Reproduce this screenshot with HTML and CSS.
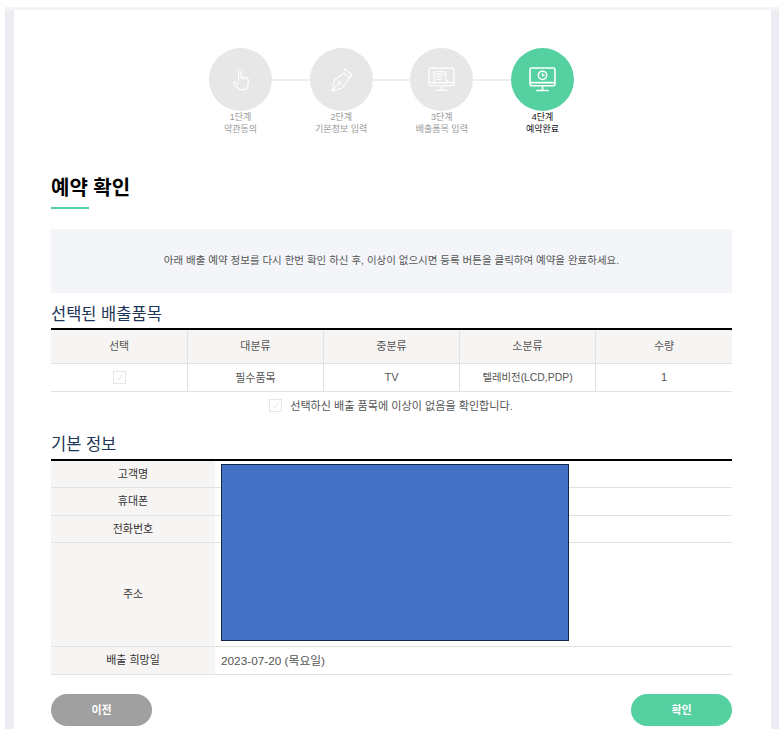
FILE: index.html
```html
<!DOCTYPE html>
<html lang="ko">
<head>
<meta charset="utf-8">
<title>예약 확인</title>
<link rel="stylesheet" href="styles.css">
</head>
<body>
<div class="frame">
<main class="panel">
  <ol class="steps">
    <li class="step">
      <span class="circle">
        <svg class="icon" viewBox="0 0 24 24" fill="none" stroke="currentColor" stroke-width="1.100"><path d="M9.500 13V5.500a1.300 1.300 0 0 1 2.600 0V11l0-1.200a1.200 1.200 0 0 1 2.400 0V11.500l0-1a1.200 1.200 0 0 1 2.400 0v1l0-.4a1.100 1.100 0 0 1 2.200 0V16c0 3.500-2.300 6-5.600 6-3 0-4.300-1.300-5.500-3L4.600 15.800c-.8-1.400 1-2.600 2.100-1.500L9.500 16.500"/><path d="M10.800 .8v1.800M7.400 1.800l1 1.400M14.200 1.800l-1 1.400"/></svg>
      </span>
      <span class="label">1단계<br>약관동의</span>
    </li>
    <li class="line"></li>
    <li class="step">
      <span class="circle">
        <svg class="icon" viewBox="0 0 24 24" fill="none" stroke="currentColor" stroke-width="1.100"><path d="M3 23l2.500-11L15 5l5 5.500-7 9.500z"/><path d="M14.500 3.500L16.500 1l6.500 6.500-2.500 2.500"/><path d="M3 23l6.500-7"/><circle cx="10.500" cy="14.500" r="1.500"/></svg>
      </span>
      <span class="label">2단계<br>기본정보 입력</span>
    </li>
    <li class="line"></li>
    <li class="step">
      <span class="circle">
        <svg class="icon icon-wide" viewBox="0 0 26 24" fill="none" stroke="currentColor" stroke-width="1.100"><rect x="1" y="1" width="24" height="17" rx="1.500"/><path d="M13 18v4M7 22.500h12M1 15h24"/><path d="M6 15V4.500h11v5M8 7h7M8 9.500h5M8 12h5"/><path d="M16 10.500l3 3-1 .5 1 1"/></svg>
      </span>
      <span class="label">3단계<br>배출품목 입력</span>
    </li>
    <li class="line"></li>
    <li class="step step-active">
      <span class="circle">
        <svg class="icon icon-wide" viewBox="0 0 26 24" fill="none" stroke="currentColor" stroke-width="1.500"><rect x="1" y="1" width="24" height="17" rx="1.500"/><path d="M13 18v4M7 22.500h12M1 15h24"/><circle cx="13" cy="8" r="4"/><path d="M13 6v2.200h2"/></svg>
      </span>
      <span class="label">4단계<br>예약완료</span>
    </li>
  </ol>

  <h1 class="title">예약 확인</h1>
  <p class="notice">아래 배출 예약 정보를 다시 한번 확인 하신 후, 이상이 없으시면 등록 버튼을 클릭하여 예약을 완료하세요.</p>

  <h2 class="subtitle">선택된 배출품목</h2>
  <table class="items">
    <thead>
      <tr><th class="col-first">선택</th><th>대분류</th><th>중분류</th><th>소분류</th><th>수량</th></tr>
    </thead>
    <tbody>
      <tr>
        <td><span class="check"><svg viewBox="0 0 13 13" fill="none" stroke="#e2e2e2" stroke-width="1"><path d="M3 6.500l2.500 3L10 3"/></svg></span></td>
        <td class="cell-text">필수품목</td><td class="cell-text">TV</td><td class="cell-text cell-narrow">텔레비전(LCD,PDP)</td><td class="cell-text">1</td>
      </tr>
    </tbody>
  </table>
  <p class="confirm">
    <span class="check"><svg viewBox="0 0 13 13" fill="none" stroke="#e2e2e2" stroke-width="1"><path d="M3 6.500l2.500 3L10 3"/></svg></span>
    <span class="confirm-text">선택하신 배출 품목에 이상이 없음을 확인합니다.</span>
  </p>

  <h2 class="subtitle subtitle-basic">기본 정보</h2>
  <div class="basic-wrap">
    <table class="basic">
      <tbody>
        <tr class="r1"><th>고객명</th><td></td></tr>
        <tr class="r2"><th>휴대폰</th><td></td></tr>
        <tr class="r3"><th>전화번호</th><td></td></tr>
        <tr class="r4"><th>주소</th><td></td></tr>
        <tr class="r5"><th>배출 희망일</th><td class="date">2023-07-20 (목요일)</td></tr>
      </tbody>
    </table>
    <div class="redaction"></div>
  </div>

  <div class="actions">
    <a class="btn btn-prev">이전</a>
    <a class="btn btn-ok">확인</a>
  </div>
</main>
</div>
</body>
</html>
```
FILE: styles.css
```css
* { box-sizing: border-box; }
html, body { margin: 0; padding: 0; background: #fff; }
body {
  font-family: "Liberation Sans", "Noto Sans CJK KR", sans-serif;
  font-size: 11px;
  color: #555;
  padding: 7px 5px 8px;
}
.frame {
  background: linear-gradient(#f4f4f6 3px, #ecedf2 3px);
  padding: 3px 8px 0 9px;
  height: 722px;
  overflow: hidden;
}
.panel {
  background: #fff;
  height: 719px;
  padding: 38px 39px 0 37px;
}
.steps {
  list-style: none;
  margin: 0;
  padding: 0;
  display: flex;
  justify-content: center;
  align-items: flex-start;
  height: 120px;
}
.step {
  width: 63px;
  display: flex;
  flex-direction: column;
  align-items: center;
  flex: none;
}
.circle {
  width: 63px;
  height: 63px;
  border-radius: 50%;
  background: #e7e7e7;
  color: #fff;
  display: flex;
  align-items: center;
  justify-content: center;
}
.icon { width: 24px; height: 24px; display: block; }
.icon-wide { width: 27px; height: 25px; }
.line {
  width: 37.670px;
  height: 2px;
  background: #eeeeee;
  margin-top: 31px;
  flex: none;
}
.label {
  width: 100px;
  text-align: center;
  font-size: 9px;
  line-height: 12px;
  color: #999;
  white-space: nowrap;
}
.step-active .circle { background: #55d0a0; }
.step-active .label { color: #111; }
.title {
  margin: 0;
  font-size: 20px;
  line-height: 28px;
  padding-top: 6px;
  font-weight: 700;
  color: #000;
}
.title::after {
  content: "";
  display: block;
  width: 38px;
  height: 2px;
  background: #55d0a0;
  margin-top: 5px;
}
.notice {
  margin: 20px 0 0;
  height: 64px;
  background: #f4f5f9;
  text-align: center;
  font-size: 10.500px;
  line-height: 62px;
  color: #555;
}
.subtitle {
  margin: 9px 0 0;
  height: 26px;
  font-size: 16.500px;
  line-height: 24px;
  font-weight: 400;
  color: #1d3557;
}
.subtitle-basic { margin-top: 13px; height: 27px; }
table { border-collapse: separate; border-spacing: 0; width: 681px; table-layout: fixed; }
.items { border-top: 2px solid #000; }
.items th {
  height: 34px;
  background: #f7f5f3;
  font-weight: 400;
  font-size: 11px;
  color: #555;
  border-bottom: 1px solid #e2e2e2;
  border-right: 1px solid #e2e2e2;
  padding: 0 0 3px;
}
.items .col-first { width: 137px; }
.items td {
  height: 28px;
  text-align: center;
  font-size: 11px;
  color: #555;
  border-bottom: 1px solid #e2e2e2;
  border-right: 1px solid #e2e2e2;
  padding: 0;
}
.items .cell-text { padding-bottom: 2px; }
.items .cell-narrow { font-size: 10.400px; }
.items tr > *:last-child { border-right: 0; }
.check {
  display: inline-block;
  width: 13px;
  height: 13px;
  border: 1px solid #e6e6e6;
  vertical-align: middle;
  background: #fff;
}
.check svg { display: block; width: 11px; height: 11px; }
.confirm {
  margin: 0;
  height: 27px;
  display: flex;
  align-items: center;
  justify-content: center;
  gap: 8px;
  font-size: 11.100px;
  color: #555;
  padding-right: 1px;
}
.confirm-text { position: relative; top: -1px; }
.basic-wrap { position: relative; }
.basic { border-top: 2px solid #000; }
.basic th {
  width: 164px;
  background: #f7f5f3;
  font-weight: 400;
  font-size: 11px;
  color: #333;
  border-bottom: 1px solid #e2e2e2;
  padding: 0 0 3px;
}
.basic td {
  font-size: 11px;
  color: #555;
  padding: 0 0 3px 6px;
  border-bottom: 1px solid #e2e2e2;
}
.basic .date { font-size: 11.800px; }
.r1 th { height: 27px; }
.r2 th { height: 28px; }
.r3 th { height: 27px; }
.r4 th { height: 104px; }
.r5 th { height: 28px; }
.redaction {
  position: absolute;
  left: 170px;
  top: 5px;
  width: 348px;
  height: 177px;
  background: #4472c4;
  border: 1px solid #12264a;
}
.actions {
  margin-top: 19px;
  display: flex;
  justify-content: space-between;
}
.btn {
  width: 101px;
  height: 32px;
  border-radius: 16px;
  display: flex;
  align-items: center;
  justify-content: center;
  color: #fff;
  font-size: 11px;
  font-weight: 700;
  padding-bottom: 2px;
}
.btn-prev { background: #a0a0a0; }
.btn-ok { background: #55d0a0; }
```
